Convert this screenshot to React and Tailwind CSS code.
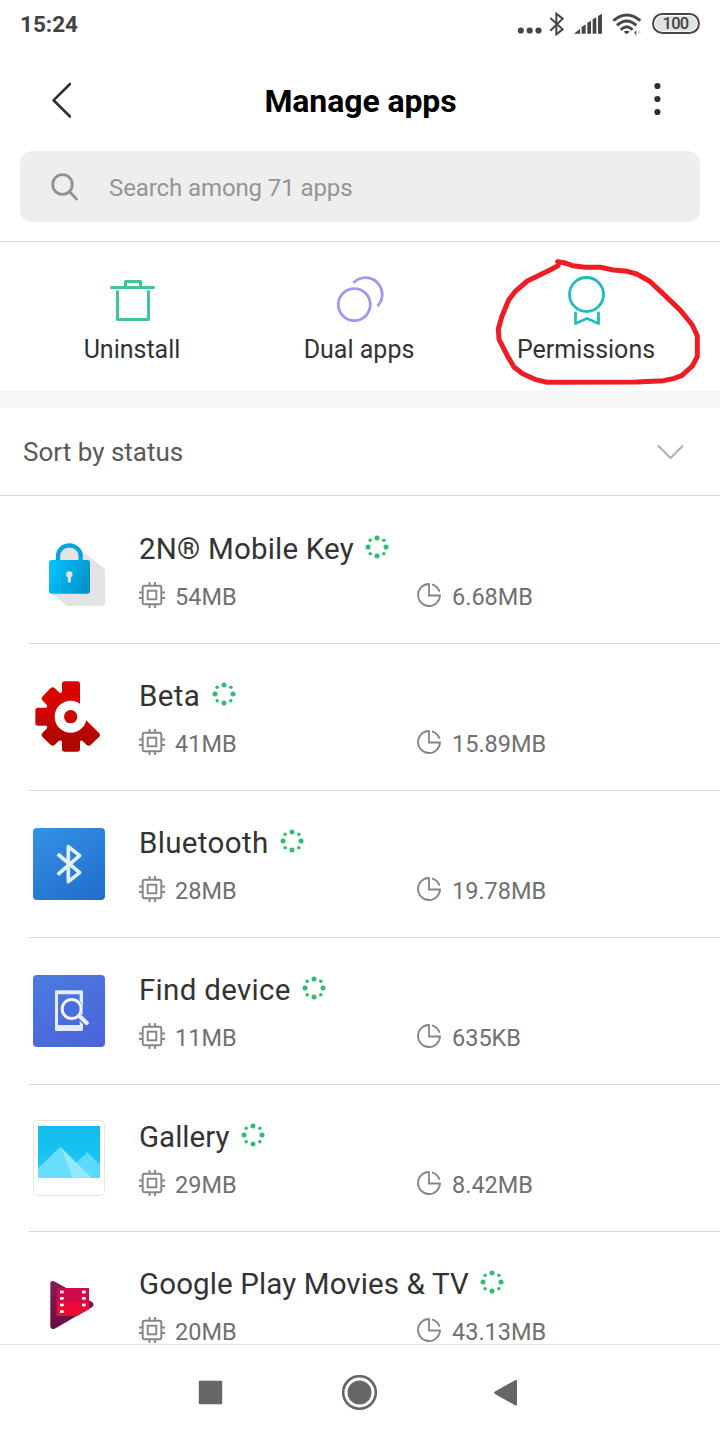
import React from "react";

const apps = [
  { name: "2N® Mobile Key", size: "54MB", storage: "6.68MB", Icon: LockIcon, tracking: "tracking-[0.2px]" },
  { name: "Beta", size: "41MB", storage: "15.89MB", Icon: BetaIcon, tracking: "tracking-[0.35px]" },
  { name: "Bluetooth", size: "28MB", storage: "19.78MB", Icon: BluetoothIcon, tracking: "tracking-[0.35px]" },
  { name: "Find device", size: "11MB", storage: "635KB", Icon: FindIcon, tracking: "tracking-[0.3px]" },
  { name: "Gallery", size: "29MB", storage: "8.42MB", Icon: GalleryIcon, tracking: "tracking-normal" },
  { name: "Google Play Movies & TV", size: "20MB", storage: "43.13MB", Icon: MoviesIcon, tracking: "tracking-[0.12px]" },
];

function LockIcon() {
  return (
    <svg className="size-[72px] overflow-visible" viewBox="39 42 216 216">
      <defs>
        <linearGradient id="lockBody" x1="0" y1="0.3" x2="1" y2="0.7">
          <stop offset="0" stopColor="#04c2fb" />
          <stop offset="1" stopColor="#0391cb" />
        </linearGradient>
      </defs>
      <path d="M178 86 L255 148 V248 Q255 258 245 258 H140 L92 218 L120 100Z" fill="#e4e4e4" />
      <path d="M114 125 V108 a34 32 0 0 1 68 0 V125" fill="#e4e4e4" stroke="#05a6dd" strokeWidth="13" />
      <rect x="87" y="120" width="123" height="101" rx="8" fill="url(#lockBody)" />
      <circle cx="148" cy="163" r="9.5" fill="#e4e4e4" />
      <path d="M148 165 V184" stroke="#e4e4e4" strokeWidth="9" strokeLinecap="round" />
    </svg>
  );
}

function BetaIcon() {
  return (
    <svg className="size-[72px] overflow-visible" viewBox="39 33 216 216">
      <defs>
        <linearGradient id="beta" gradientUnits="userSpaceOnUse" x1="0" y1="34" x2="0" y2="245">
          <stop offset="0.35" stopColor="#d60500" />
          <stop offset="0.8" stopColor="#b30500" />
        </linearGradient>
      </defs>
      <path
        fill="url(#beta)"
        d="M126 42 Q126 34 134 34 H172 Q180 34 180 42 V102 L198 150 L237 189 Q243 195 237 201 L212 225 Q206 230 200 225 L188 213 Q184 210 180 214 V237 Q180 245 172 245 H134 Q126 245 126 237 V214 Q121 209 116 213 L104 225 Q98 230 92 225 L67 200 Q62 195 67 189 L80 176 Q84 170 79 167 H54 Q46 167 46 159 V121 Q46 113 54 113 H79 Q84 110 80 104 L67 91 Q62 85 67 80 L92 54 Q98 49 104 54 L117 67 Q122 71 126 66Z"
      />
      <circle cx="152" cy="140" r="48" fill="#fff" />
      <circle cx="152" cy="140" r="20" fill="#cd0500" />
    </svg>
  );
}

function BluetoothIcon() {
  return (
    <svg className="size-[72px]" viewBox="39 54 216 216">
      <defs>
        <linearGradient id="bt" x1="0.2" y1="0" x2="0.8" y2="1">
          <stop offset="0" stopColor="#338fe2" />
          <stop offset="1" stopColor="#216fcb" />
        </linearGradient>
      </defs>
      <rect x="39" y="54" width="216" height="216" rx="12" fill="url(#bt)" />
      <path d="M113 132 L179 188 L145 215 V110 L179 137 L113 194" fill="none" stroke="#e3f0fc" strokeWidth="11" strokeLinejoin="round" />
    </svg>
  );
}

function FindIcon() {
  return (
    <svg className="size-[72px]" viewBox="39 495 216 216">
      <defs>
        <linearGradient id="find" x1="0.2" y1="0" x2="0.8" y2="1">
          <stop offset="0" stopColor="#4a7add" />
          <stop offset="1" stopColor="#4b64dc" />
        </linearGradient>
      </defs>
      <rect x="39" y="495" width="216" height="216" rx="12" fill="url(#find)" />
      <path fillRule="evenodd" d="M109 541 H185 Q189 541 189 545 V659 Q189 663 185 663 H109 Q105 663 105 659 V545 Q105 541 109 541Z M114 553 V645 H179 V553Z" fill="#e6ecfc" />
      <path d="M155 597 L201 640" stroke="#4b6bdc" strokeWidth="20" />
      <circle cx="155" cy="597" r="34" fill="#4b6edc" />
      <circle cx="155" cy="597" r="28.5" fill="none" stroke="#f1f4fe" strokeWidth="9" />
      <path d="M178 618 L200 639" stroke="#e8edfc" strokeWidth="13" strokeLinecap="round" />
    </svg>
  );
}

function GalleryIcon() {
  return (
    <svg className="size-[72px] overflow-visible" viewBox="39 66 216 216">
      <defs>
        <linearGradient id="sky" x1="0" y1="0" x2="0" y2="1">
          <stop offset="0" stopColor="#12bbea" />
          <stop offset="1" stopColor="#1fcbf6" />
        </linearGradient>
      </defs>
      <rect x="40.500" y="61.500" width="213" height="225" rx="12" fill="#fff" stroke="#e6e6e6" strokeWidth="3" />
      <rect x="54" y="78" width="186" height="156" fill="url(#sky)" />
      <path d="M120 234 L202 156 L240 194 V234Z" fill="#5bd8fa" />
      <path d="M54 234 V205 L121 140 L158 234Z" fill="#69defc" />
      <path d="M121 140 L216 234 H158Z" fill="#92e8fe" />
    </svg>
  );
}

function MoviesIcon() {
  return (
    <svg className="size-[72px]" viewBox="39 507 216 216">
      <defs>
        <linearGradient id="play" x1="0" y1="0" x2="0" y2="1">
          <stop offset="0" stopColor="#84205a" />
          <stop offset="1" stopColor="#6a0a40" />
        </linearGradient>
      </defs>
      <path d="M91 550 Q92 540 102 544 L216 606 Q225 613 217 621 L104 686 Q93 690 91 680Z" fill="url(#play)" />
      <path d="M110 564 H207 V627 L170 648 H110Z" fill="#cf0b49" />
      <path d="M110 606 H207 V627 L170 648 H110Z" fill="#ee0a35" />
      <g fill="#fff">
        <rect x="120" y="572" width="11" height="8" />
        <rect x="120" y="591" width="11" height="8" />
        <rect x="120" y="611" width="11" height="8" />
        <rect x="120" y="631" width="11" height="8" />
        <rect x="186" y="572" width="11" height="8" />
        <rect x="186" y="591" width="11" height="8" />
        <rect x="186" y="611" width="11" height="8" />
      </g>
    </svg>
  );
}

function RunningDots() {
  return (
    <svg className="h-6 w-6" viewBox="0 0 72 72" fill="#2fbc6e">
      <circle cx="36" cy="9" r="7.500" />
      <circle cx="36" cy="63" r="7.500" />
      <circle cx="9" cy="36" r="7.500" />
      <circle cx="63" cy="36" r="7.500" />
      <circle cx="15.500" cy="15.500" r="5.300" />
      <circle cx="56.500" cy="15.500" r="5.300" />
      <circle cx="15.500" cy="56.500" r="5.300" />
      <circle cx="56.500" cy="56.500" r="5.300" />
    </svg>
  );
}

function ChipIcon() {
  return (
    <svg className="size-[26px]" viewBox="0 0 26 26" fill="none" stroke="#858585" strokeWidth="1.9">
      <rect x="3.700" y="3.700" width="18.600" height="18.600" rx="1.800" />
      <rect x="8.700" y="8.700" width="8.600" height="8.600" />
      <path d="M10.500 0V3M16 0V3M10.500 23V26M16 23V26M0 10.500H3M0 16H3M23 10.500H26M23 16H26" />
    </svg>
  );
}

function PieIcon() {
  return (
    <svg className="size-[24px]" viewBox="0 0 24 24" fill="none" stroke="#858585" strokeWidth="1.8">
      <path d="M12 1 A11 11 0 1 0 23 12.500 H12 V0.200" />
      <path d="M15 1.300 A11.500 11.500 0 0 1 22.600 8.800" />
    </svg>
  );
}

function StatusBar() {
  return (
    <div className="flex h-12 items-start justify-between pr-5 pl-5 text-[#424242]">
      <span className="mt-[11px] text-[22.500px] leading-[27px] font-bold">15:24</span>
      <div className="flex items-start">
        <svg className="mt-3 h-6 w-[126px]" viewBox="48 36 378 72" fill="#464646">
          <circle cx="62.500" cy="91.500" r="9.300" />
          <circle cx="89" cy="91.500" r="9.300" />
          <circle cx="115.500" cy="91.500" r="9.300" />
          <path d="M151 54 L188 88 L169 103 V41 L188 56 L151 92" fill="none" stroke="#464646" strokeWidth="6" />
          <path d="M222 101 L240 86 V101Z M245 81 L257 73 V101H245Z M262 68 L273 62 V101H262Z M278 58 L289 52 V101H278Z M294 48 L306 41 V101H294Z" />
          <g fill="none" stroke="#464646" strokeWidth="8.500">
            <path d="M340 62 Q380 28 421 62" />
            <path d="M351 76 Q380 50 409 76" />
            <path d="M362 89 Q380 71 398 89" />
          </g>
          <path d="M371 95 Q380 89 389 95 L380 103Z" />
          <path d="M403 98 L409 90 V107Z" />
          <path d="M414 89 L423 97 L414 103Z" fill="#d4d4d4" />
        </svg>
        <div className="mt-[13px] ml-[10px] flex h-[21px] w-12 rounded-full border-2 border-[#464646] p-px">
          <div className="flex flex-1 items-center justify-center rounded-full bg-[#e2e2e2] pr-px text-[16.500px] leading-[17px] font-medium tracking-[-0.7px]">
            100
          </div>
        </div>
      </div>
    </div>
  );
}

function Action({ label, children }) {
  return (
    <div className="flex w-[227px] flex-col items-center">
      <svg className="h-[50px] w-[50px] overflow-visible" viewBox="0 0 50 50" fill="none">
        {children}
      </svg>
      <span className="mt-2 text-[25px] leading-[30px] text-[#333]">{label}</span>
    </div>
  );
}

function AppRow({ app, first }) {
  const { Icon } = app;
  return (
    <div className={first ? "ml-[29px] flex h-[147px] border-t border-transparent" : "ml-[29px] flex h-[147px] border-t border-[#d9d9d9]"}>
      <div className="mt-[37px] ml-1 w-[106px]">
        <Icon />
      </div>
      <div className="flex-1">
        <div className="mt-[34px] flex h-9 items-center">
          <span className={`text-[29.500px] leading-9 whitespace-nowrap text-[#333] ${app.tracking}`}>{app.name}</span>
          <span className="mb-[5px] ml-[11.500px]">
            <RunningDots />
          </span>
        </div>
        <div className="mt-[15px] flex text-[23.500px] leading-7 text-[#707070]">
          <div className="flex w-[278px] gap-[10px]">
            <ChipIcon />
            <span className="pt-px">{app.size}</span>
          </div>
          <div className="flex gap-[11px] pt-px">
            <PieIcon />
            <span>{app.storage}</span>
          </div>
        </div>
      </div>
    </div>
  );
}

export default function App() {
  return (
    <div className="relative flex h-[1440px] w-[720px] flex-col overflow-hidden bg-white font-['Roboto',sans-serif]">
      <StatusBar />
      <header className="flex h-[103px] items-center justify-between pr-[59px] pl-[51px]">
        <svg className="h-9 w-5" viewBox="0 0 20 36" fill="none" stroke="#303030" strokeWidth="2.600" strokeLinecap="round" strokeLinejoin="round">
          <path d="M19 2 L2.500 18.300 L19 34.500" />
        </svg>
        <h1 className="mt-0.5 mr-[3px] text-[32px] leading-9 font-bold tracking-[-0.1px] text-black">Manage apps</h1>
        <svg className="mb-px h-9 w-2" viewBox="0 0 8 36" fill="#303030">
          <circle cx="4.400" cy="5" r="3.100" />
          <circle cx="4.400" cy="18" r="3.100" />
          <circle cx="4.400" cy="31" r="3.100" />
        </svg>
      </header>
      <div className="mx-5 flex h-[71px] items-center rounded-xl bg-[#eee] pl-[31px] text-[#959595]">
        <svg className="size-[28px]" viewBox="0 0 28 28" fill="none" stroke="#929292" strokeWidth="2.800" strokeLinecap="round">
          <circle cx="11.500" cy="11.500" r="9.800" />
          <path d="M18.500 18.500 L25.500 26" />
        </svg>
        <span className="mt-0.5 ml-[30px] text-[24px] leading-7 tracking-[-0.1px]">Search among 71 apps</span>
      </div>
      <div className="mt-[19px] flex h-[150px] justify-center border-t border-[#d4d4d4] pt-[35px] pr-0.5">
        <Action label="Uninstall">
          <g stroke="#3ec794" strokeWidth="3" strokeLinecap="round" strokeLinejoin="round">
            <path d="M4.500 10.500H46.500M18.500 9.500V4.500H33.500V9.500M10.500 14.500V42.500H41.500V14.500" />
          </g>
        </Action>
        <Action label="Dual apps">
          <g stroke="#9d9aee" strokeWidth="2.800">
            <circle cx="20.300" cy="27.600" r="16" />
            <path d="M19.500 5.800 A16.200 16.200 0 0 1 43.500 29" />
          </g>
        </Action>
        <Action label="Permissions">
          <g stroke="#22bdbb" strokeWidth="2.800" strokeLinecap="round" strokeLinejoin="round">
            <circle cx="25.500" cy="17.500" r="17" />
            <path d="M14.500 36V46.500L26 41.500L37.500 46.500V36" />
          </g>
        </Action>
      </div>
      <div className="h-[17px] shrink-0 bg-[#f7f7f7]" />
      <div className="flex h-[88px] shrink-0 items-center justify-between border-b border-[#d9d9d9] pr-9 pl-[23px]">
        <span className="text-[26px] leading-[30px] text-[#595959]">Sort by status</span>
        <svg className="h-4 w-[27px]" viewBox="0 0 27 16" fill="none" stroke="#b0b0b0" strokeWidth="2">
          <path d="M1 1.500 L13.500 14 L26 1.500" />
        </svg>
      </div>
      <main className="h-[848px] shrink-0 overflow-hidden">
        {apps.map((app, i) => (
          <AppRow key={app.name} app={app} first={i === 0} />
        ))}
      </main>
      <nav className="flex h-24 shrink-0 items-center border-t border-[#e3e3e3] bg-white pl-[198px]">
        <svg className="h-9 w-[321px]" viewBox="0 0 321 36" fill="#666">
          <rect x="0.800" y="5.800" width="23.400" height="23.400" rx="1" />
          <circle cx="161.500" cy="17.500" r="12" />
          <circle cx="161.500" cy="17.500" r="16.300" fill="none" stroke="#666" strokeWidth="2.600" />
          <path d="M297 16.500 L317.500 5 Q319 4.500 319 6 V29.500 Q319 31 317.500 30.500 L297 19 Q295.500 17.700 297 16.500Z" />
        </svg>
      </nav>
      <svg className="absolute top-[240px] left-[480px] h-[170px] w-[240px]" viewBox="0 0 720 510" fill="none" stroke="#ee1c24" strokeWidth="15" strokeLinecap="round" strokeLinejoin="round">
        <path d="M233 65 L252 68 L278 77 L315 82 L363 82 L400 90 L442 94 L470 102 L508 123 L545 157 L602 212 L637 255 L652 288 L652 350 L637 378 L605 407 L580 416 L550 422 L470 426 L202 427 L165 418 L128 401 L102 381 L82 347 L57 298 L55 267 L65 231 L86 180 L105 155 L142 123 L210 90 L234 77" />
      </svg>
    </div>
  );
}
